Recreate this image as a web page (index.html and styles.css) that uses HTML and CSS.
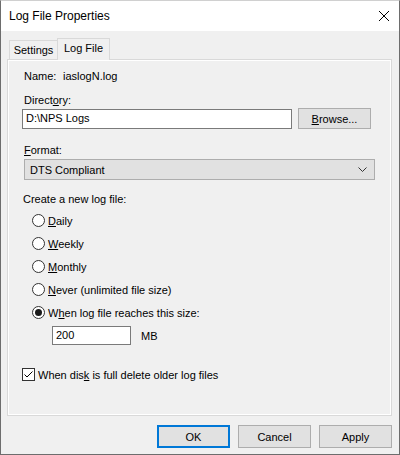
FILE: index.html
```html
<!DOCTYPE html>
<html>
<head>
<meta charset="utf-8">
<link rel="stylesheet" href="styles.css">
</head>
<body>
<div class="window">
  <div class="titlebar">
    <span class="title">Log File Properties</span>
    <svg class="close" width="12" height="12" viewBox="0 0 12 12"><path d="M1 1 L11 11 M11 1 L1 11" stroke="#000" stroke-width="1" fill="none"/></svg>
  </div>
  <div class="body">
    <div class="tabs">
      <div class="tab">Settings</div>
      <div class="tab selected">Log File</div>
    </div>
    <div class="panel">
      <div class="row name"><span class="name-label">Name:</span><span>iaslogN.log</span></div>
      <div class="row label dir-label">Direct<u>o</u>ry:</div>
      <div class="dir-row">
        <div class="textbox dir-input">D:\NPS Logs</div>
        <div class="button browse"><span><u>B</u>rowse...</span></div>
      </div>
      <div class="row label format-label"><u>F</u>ormat:</div>
      <div class="select">
        <span>DTS Compliant</span>
        <svg class="chevron" width="9" height="5" viewBox="0 0 9 5"><path d="M0.5 0.5 L4.5 4.5 L8.5 0.5" stroke="#333" stroke-width="1" fill="none"/></svg>
      </div>
      <div class="row label create-label">Create a new log file:</div>
      <div class="radios">
        <div class="radio-row"><span class="radio"></span><span><u>D</u>aily</span></div>
        <div class="radio-row"><span class="radio"></span><span><u>W</u>eekly</span></div>
        <div class="radio-row"><span class="radio"></span><span><u>M</u>onthly</span></div>
        <div class="radio-row"><span class="radio"></span><span><u>N</u>ever (unlimited file size)</span></div>
        <div class="radio-row"><span class="radio checked"></span><span>W<u>h</u>en log file reaches this size:</span></div>
      </div>
      <div class="size-row">
        <div class="textbox size-input">200</div>
        <span class="mb">MB</span>
      </div>
      <div class="check-row">
        <span class="checkbox"><svg width="11" height="11" viewBox="0 0 11 11"><path d="M1.5 5.5 L4 8 L9.5 2.5" stroke="#000" stroke-width="1" fill="none"/></svg></span>
        <span>When dis<u>k</u> is full delete older log files</span>
      </div>
    </div>
    <div class="footer">
      <div class="button default">OK</div>
      <div class="button">Cancel</div>
      <div class="button">Apply</div>
    </div>
  </div>
</div>
</body>
</html>
```
FILE: styles.css
```css
html, body {
  margin: 0;
  padding: 0;
}
body {
  font-family: "Liberation Sans", Arial, sans-serif;
  font-size: 11px;
  color: #000;
  background: #f0f0f0;
}
u {
  text-decoration: underline;
  text-underline-offset: 1px;
}
.window {
  width: 400px;
  height: 455px;
  box-sizing: border-box;
  border-left: 1px solid #6d6d6d;
  border-right: 1px solid #6d6d6d;
  border-bottom: 1px solid #6d6d6d;
  border-top: 1px solid #d0d0d0;
  background: #f0f0f0;
  display: flex;
  flex-direction: column;
}
.titlebar {
  height: 30px;
  background: #fff;
  display: flex;
  align-items: center;
  justify-content: space-between;
  padding: 0 9px 0 8px;
}
.title {
  font-size: 12px;
  padding-bottom: 1px;
}
.close {
  display: block;
  margin-top: -1px;
}
.body {
  padding: 0 7px 0 6px;
}
.tabs {
  margin-top: 7px;
  height: 21px;
  padding-left: 2px;
  display: flex;
  align-items: flex-end;
}
.tab {
  width: 49px;
  height: 19px;
  box-sizing: border-box;
  border: 1px solid #d9d9d9;
  border-bottom: none;
  text-align: center;
  line-height: 18px;
  background: #f0f0f0;
}
.tab.selected {
  width: 53px;
  height: 22px;
  margin-bottom: -1px;
  line-height: 18px;
  border-color: #d9d9d9;
  background: #f0f0f0;
  position: relative;
  z-index: 1;
  margin-left: -1px;
}
.panel {
  height: 357px;
  box-sizing: border-box;
  border: 1px solid #d9d9d9;
  box-shadow: inset 0 0 0 1px #fff;
  padding: 9px 0 0 14px;
}
.row {
  height: 15px;
  line-height: 15px;
  white-space: nowrap;
}
.name {
  padding-left: 2px;
}
.name-label {
  display: inline-block;
  width: 39px;
}
.dir-label {
  margin-top: 9px;
  padding-left: 2px;
}
.dir-row {
  height: 21px;
  display: flex;
  align-items: flex-start;
}
.textbox {
  box-sizing: border-box;
  background: #fff;
  border: 1px solid #7a7a7a;
  padding-left: 3px;
  line-height: 17px;
}
.dir-input {
  margin-top: 1px;
  width: 270px;
  height: 20px;
}
.button {
  box-sizing: border-box;
  width: 73px;
  height: 21px;
  background: #e1e1e1;
  border: 1px solid #adadad;
  display: flex;
  align-items: center;
  justify-content: center;
}
.browse {
  margin-left: 6px;
}
.format-label {
  margin-top: 14px;
  padding-left: 2px;
}
.select {
  margin-top: 1px;
  margin-left: 2px;
  width: 351px;
  height: 21px;
  box-sizing: border-box;
  background: #e1e1e1;
  border: 1px solid #adadad;
  display: flex;
  align-items: center;
  justify-content: space-between;
  padding: 0 7px 0 5px;
}
.chevron {
  display: block;
}
.create-label {
  margin-top: 12px;
  padding-left: 1px;
}
.radios {
  margin-top: 2px;
  padding-left: 10px;
}
.radio-row {
  height: 23px;
  display: flex;
  align-items: center;
  white-space: nowrap;
}
.radio {
  width: 13px;
  height: 13px;
  box-sizing: border-box;
  border: 1px solid #333;
  border-radius: 50%;
  background: #fff;
  margin-right: 3px;
  display: flex;
  align-items: center;
  justify-content: center;
}
.radio.checked::after {
  content: "";
  width: 7px;
  height: 7px;
  border-radius: 50%;
  background: #1a1a1a;
}
.size-row {
  margin-top: 2px;
  padding-left: 30px;
  display: flex;
  align-items: center;
  height: 19px;
}
.size-input {
  width: 79px;
  height: 19px;
  padding-left: 3px;
  line-height: 17px;
}
.mb {
  margin-left: 10px;
}
.check-row {
  margin-top: 22px;
  height: 15px;
  display: flex;
  align-items: center;
  white-space: nowrap;
}
.checkbox {
  width: 13px;
  height: 13px;
  box-sizing: border-box;
  border: 1px solid #333;
  background: #fff;
  margin-right: 3px;
  display: flex;
  align-items: center;
  justify-content: center;
}
.checkbox svg {
  display: block;
}
.footer {
  margin-top: 9px;
  display: flex;
  justify-content: flex-end;
  gap: 8px;
}
.footer .button {
  height: 23px;
}
.button.default {
  border: 2px solid #0078d7;
}
```
